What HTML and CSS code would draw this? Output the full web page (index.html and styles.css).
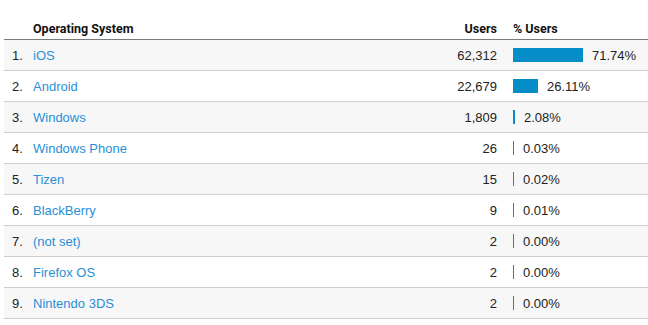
FILE: index.html
```html
<!DOCTYPE html>
<html>
<head>
<meta charset="utf-8">
<link rel="stylesheet" href="styles.css">
</head>
<body>
<div class="table">
  <div class="row head">
    <div class="c-idx"></div>
    <div class="c-name">Operating System</div>
    <div class="c-users">Users</div>
    <div class="c-pct">% Users</div>
  </div>
  <div class="row alt">
    <div class="c-idx">1.</div>
    <div class="c-name"><a>iOS</a></div>
    <div class="c-users">62,312</div>
    <div class="c-pct"><span class="bar" style="width:70px"></span><span>71.74%</span></div>
  </div>
  <div class="row">
    <div class="c-idx">2.</div>
    <div class="c-name"><a>Android</a></div>
    <div class="c-users">22,679</div>
    <div class="c-pct"><span class="bar" style="width:25px"></span><span>26.11%</span></div>
  </div>
  <div class="row alt">
    <div class="c-idx">3.</div>
    <div class="c-name"><a>Windows</a></div>
    <div class="c-users">1,809</div>
    <div class="c-pct"><span class="bar" style="width:2px"></span><span>2.08%</span></div>
  </div>
  <div class="row">
    <div class="c-idx">4.</div>
    <div class="c-name"><a>Windows Phone</a></div>
    <div class="c-users">26</div>
    <div class="c-pct"><span class="bar" style="width:1px"></span><span>0.03%</span></div>
  </div>
  <div class="row alt">
    <div class="c-idx">5.</div>
    <div class="c-name"><a>Tizen</a></div>
    <div class="c-users">15</div>
    <div class="c-pct"><span class="bar" style="width:1px"></span><span>0.02%</span></div>
  </div>
  <div class="row">
    <div class="c-idx">6.</div>
    <div class="c-name"><a>BlackBerry</a></div>
    <div class="c-users">9</div>
    <div class="c-pct"><span class="bar" style="width:1px"></span><span>0.01%</span></div>
  </div>
  <div class="row alt">
    <div class="c-idx">7.</div>
    <div class="c-name"><a>(not set)</a></div>
    <div class="c-users">2</div>
    <div class="c-pct"><span class="bar" style="width:1px"></span><span>0.00%</span></div>
  </div>
  <div class="row">
    <div class="c-idx">8.</div>
    <div class="c-name"><a>Firefox OS</a></div>
    <div class="c-users">2</div>
    <div class="c-pct"><span class="bar" style="width:1px"></span><span>0.00%</span></div>
  </div>
  <div class="row alt">
    <div class="c-idx">9.</div>
    <div class="c-name"><a>Nintendo 3DS</a></div>
    <div class="c-users">2</div>
    <div class="c-pct"><span class="bar" style="width:1px"></span><span>0.00%</span></div>
  </div>
</div>
</body>
</html>
```

FILE: styles.css
```css
html, body {
  margin: 0;
  padding: 0;
  background: #fff;
}
body {
  font-family: "Liberation Sans", Arial, sans-serif;
  font-size: 13px;
  color: #222;
}
.table {
  margin-left: 4px;
  width: 644px;
}
.row {
  display: grid;
  grid-template-columns: 29px 1fr 80px 151px;
  align-items: center;
  height: 30px;
  border-bottom: 1px solid #cfcfcf;
}
.row.alt {
  background: #f7f7f7;
}
.row.head {
  height: 39px;
  align-items: end;
  border-bottom: 1px solid #7a7a7a;
  font-family: Roboto, "Liberation Sans", sans-serif;
  font-weight: 700;
  font-size: 12.5px;
  color: #111;
}
.row.head > div {
  padding-bottom: 3px;
}
.c-idx {
  padding-left: 8px;
}
.c-name a {
  color: #2a8fd6;
  text-decoration: none;
}
.c-users {
  text-align: right;
}
.c-pct {
  padding-left: 16px;
  display: flex;
  align-items: center;
}
.bar {
  display: inline-block;
  height: 14px;
  background: #058dc7;
  margin-right: 9px;
}
```
